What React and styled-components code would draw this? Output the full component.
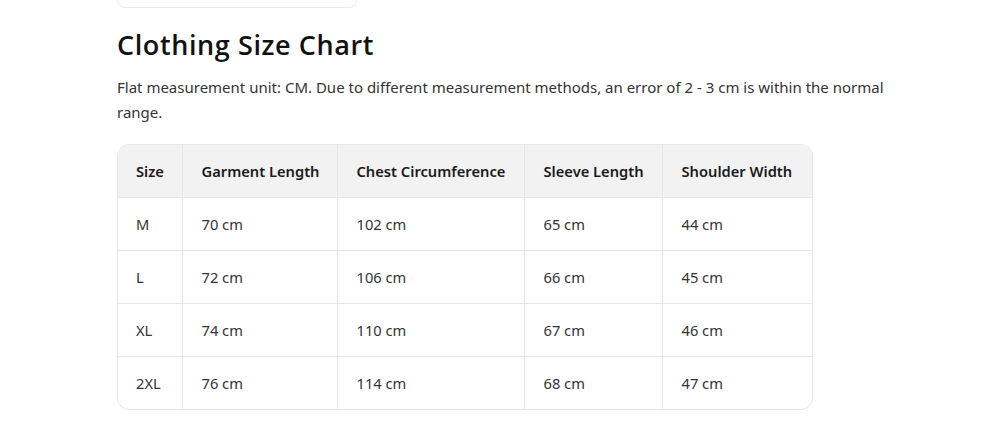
import React from "react";
import styled, { createGlobalStyle } from "styled-components";

const Global = createGlobalStyle`
  html, body { margin: 0; padding: 0; background: #fff; }
  body { font-family: "Noto Sans", "Open Sans", sans-serif; color: #2b2b2b; }
`;

const Page = styled.div`
  padding: 0 0 0 117px;
  width: 790px;
`;

const CardStub = styled.div`
  width: 238px;
  height: 7px;
  border: 1px solid #ebebeb;
  border-top: none;
  border-radius: 0 0 9px 9px;
`;

const Title = styled.h2`
  margin: 22px 0 0;
  font-family: "Open Sans", sans-serif;
  font-weight: 600;
  font-size: 27px;
  line-height: 30px;
  color: #111;
  letter-spacing: 0.6px;
`;

const Intro = styled.p`
  margin: 15px 0 0;
  font-size: 15px;
  line-height: 25px;
  color: #333;
`;

const TableWrap = styled.div`
  margin-top: 19px;
  width: 694px;
  border: 1px solid #e6e6e6;
  border-radius: 12px;
  overflow: hidden;
`;

const Table = styled.table`
  width: 100%;
  border-collapse: collapse;
  table-layout: fixed;
`;

const Col = styled.col`
  width: ${(p) => p.$w}px;
`;

const Head = styled.th`
  background: #f2f2f2;
  height: 52px;
  padding: 0 0 0 19px;
  text-align: left;
  font-size: 14.7px;
  font-weight: 600;
  color: #1a1a1a;
  border-right: 1px solid #e6e6e6;
  border-bottom: 1px solid #e6e6e6;
  &:first-child { padding-left: 18px; }
  &:last-child { border-right: none; }
`;

const Cell = styled.td`
  height: 52px;
  padding: 0 0 0 19px;
  font-size: 14.7px;
  color: #333;
  border-right: 1px solid #e6e6e6;
  border-bottom: 1px solid #e6e6e6;
  &:first-child { padding-left: 18px; }
  &:last-child { border-right: none; }
  tr:last-child > & { border-bottom: none; }
`;

const cols = [64, 155, 187, 138, 150];
const headers = ["Size", "Garment Length", "Chest Circumference", "Sleeve Length", "Shoulder Width"];
const rows = [
  ["M", "70 cm", "102 cm", "65 cm", "44 cm"],
  ["L", "72 cm", "106 cm", "66 cm", "45 cm"],
  ["XL", "74 cm", "110 cm", "67 cm", "46 cm"],
  ["2XL", "76 cm", "114 cm", "68 cm", "47 cm"],
];

export default function App() {
  return (
    <>
      <Global />
      <Page>
        <CardStub />
        <Title>Clothing Size Chart</Title>
        <Intro>
          Flat measurement unit: CM. Due to different measurement methods, an error of 2 - 3 cm is within the normal range.
        </Intro>
        <TableWrap>
          <Table>
            <colgroup>
              {cols.map((w, i) => (
                <Col key={i} $w={w} />
              ))}
            </colgroup>
            <thead>
              <tr>
                {headers.map((h) => (
                  <Head key={h}>{h}</Head>
                ))}
              </tr>
            </thead>
            <tbody>
              {rows.map((r) => (
                <tr key={r[0]}>
                  {r.map((c, i) => (
                    <Cell key={i}>{c}</Cell>
                  ))}
                </tr>
              ))}
            </tbody>
          </Table>
        </TableWrap>
      </Page>
    </>
  );
}
